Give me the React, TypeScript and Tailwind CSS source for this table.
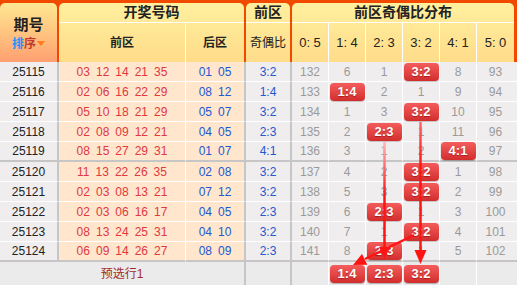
const ratios = ['0: 5', '1: 4', '2: 3', '3: 2', '4: 1', '5: 0']
const labels = ['0:5', '1:4', '2:3', '3:2', '4:1', '5:0']

const rows = [
  { id: '25115', front: ['03', '12', '14', '21', '35'], back: ['01', '05'], ratio: '3:2', dist: ['132', '6', '1', '', '8', '93'], hit: 3 },
  { id: '25116', front: ['02', '06', '16', '22', '29'], back: ['08', '12'], ratio: '1:4', dist: ['133', '', '2', '1', '9', '94'], hit: 1 },
  { id: '25117', front: ['05', '10', '18', '21', '29'], back: ['05', '07'], ratio: '3:2', dist: ['134', '1', '3', '', '10', '95'], hit: 3 },
  { id: '25118', front: ['02', '08', '09', '12', '21'], back: ['04', '05'], ratio: '2:3', dist: ['135', '2', '', '1', '11', '96'], hit: 2 },
  { id: '25119', front: ['08', '15', '27', '29', '31'], back: ['01', '07'], ratio: '4:1', dist: ['136', '3', '1', '2', '', '97'], hit: 4 },
  { id: '25120', front: ['11', '13', '22', '26', '35'], back: ['02', '08'], ratio: '3:2', dist: ['137', '4', '2', '', '1', '98'], hit: 3 },
  { id: '25121', front: ['02', '03', '08', '13', '21'], back: ['07', '12'], ratio: '3:2', dist: ['138', '5', '3', '', '2', '99'], hit: 3 },
  { id: '25122', front: ['02', '03', '06', '16', '17'], back: ['04', '05'], ratio: '2:3', dist: ['139', '6', '', '1', '3', '100'], hit: 2 },
  { id: '25123', front: ['08', '13', '24', '25', '31'], back: ['04', '10'], ratio: '3:2', dist: ['140', '7', '1', '', '4', '101'], hit: 3 },
  { id: '25124', front: ['06', '09', '14', '26', '27'], back: ['08', '09'], ratio: '2:3', dist: ['141', '8', '', '1', '5', '102'], hit: 2 },
]

const picked = [1, 2, 3]

function Badge({ text }: { text: string }) {
  return (
    <div className="w-[35px] h-[18px] rounded-[4px] bg-linear-to-b from-[#f45c5c] to-[#d22c2c] shadow-[0_1px_1px_rgba(0,0,0,0.25)] flex items-center justify-center text-white text-[13px] font-bold [text-shadow:0_1px_1px_rgba(120,0,0,0.5)]">
      {text}
    </div>
  )
}

function Header() {
  return (
    <div className="flex gap-[2px] bg-[#f14a00] pt-[3px] pr-[3px] text-[#222]">
      <div className="w-[57px] h-[59px] rounded-t-[5px] bg-linear-to-b from-[#ffe892] to-[#ff9f70] flex flex-col items-center justify-center pt-[2px]">
        <div className="text-[15px] font-bold leading-[20px]">期号</div>
        <div className="flex items-center text-[12px] font-bold leading-[18px]">
          <span className="text-[#2196f3]">排</span>
          <span className="text-[#c0392b]">序</span>
          <span className="ml-[1px] w-0 h-0 border-l-[4px] border-r-[4px] border-t-[5px] border-l-transparent border-r-transparent border-t-[#ff7a1a]" />
        </div>
      </div>
      <div className="w-[185px] rounded-t-[5px] bg-linear-to-b from-[#fff09e] to-[#ffdc8a]">
        <div className="h-[20px] border-b border-white flex items-center justify-center text-[14px] font-bold">开奖号码</div>
        <div className="flex h-[39px] text-[12px] font-bold">
          <div className="w-[127px] border-r border-white flex items-center justify-center">前区</div>
          <div className="flex-1 flex items-center justify-center">后区</div>
        </div>
      </div>
      <div className="w-[44px] rounded-t-[5px] bg-linear-to-b from-[#fff09e] to-[#ffdc8a]">
        <div className="h-[20px] border-b border-white flex items-center justify-center text-[14px] font-bold">前区</div>
        <div className="h-[39px] flex items-center justify-center text-[12px]">奇偶比</div>
      </div>
      <div className="w-[222px] rounded-t-[5px] bg-linear-to-b from-[#fff09e] to-[#ffdc8a]">
        <div className="h-[20px] border-b border-white flex items-center justify-center text-[14px] font-bold">前区奇偶比分布</div>
        <div className="flex h-[39px] text-[13px]">
          {ratios.map((r, i) => (
            <div key={r} className={i < 5 ? 'w-[37px] border-r border-white flex items-center justify-center' : 'flex-1 flex items-center justify-center'}>
              {r}
            </div>
          ))}
        </div>
      </div>
    </div>
  )
}

function Row({ r, i }: { r: (typeof rows)[number]; i: number }) {
  const bb = i === 4 || i === 9 ? 'border-b-2 border-b-[#c6c6c6]' : 'border-b border-b-white'
  return (
    <div className="flex h-[20px] text-[12px]">
      <div className={`w-[59px] ${bb} border-r-2 border-r-[#c6c6c6] bg-[#efeded] flex items-center justify-center text-[#222]`}>{r.id}</div>
      <div className={`w-[127px] ${bb} border-r border-r-white bg-[#ffe6cd] flex items-center justify-center gap-[6px] text-[#e0393e]`}>
        {r.front.map((n, k) => <span key={k}>{n}</span>)}
      </div>
      <div className={`w-[60px] ${bb} border-r-2 border-r-[#c6c6c6] bg-[#ffe6cd] flex items-center justify-center gap-[6px] text-[#2358d2]`}>
        {r.back.map((n, k) => <span key={k}>{n}</span>)}
      </div>
      <div className={`w-[46px] ${bb} border-r-2 border-r-[#c6c6c6] bg-[#efeded] flex items-center justify-center text-[#2358d2]`}>{r.ratio}</div>
      {r.dist.map((d, k) => (
        <div key={k} className={`${k < 5 ? 'w-[37px] border-r border-r-white' : 'w-[40px] pr-[3px]'} ${bb} bg-[#efeded] flex items-center justify-center text-[#9a9a9a]`}>
          {k === r.hit ? <Badge text={labels[k]} /> : d}
        </div>
      ))}
    </div>
  )
}

function Arrows() {
  return (
    <svg className="absolute left-0 top-0 pointer-events-none" width="517" height="285">
      <defs>
        <linearGradient id="ga" gradientUnits="userSpaceOnUse" x1="0" y1="142" x2="0" y2="195">
          <stop offset="0" stopColor="#ffb8b8" />
          <stop offset="1" stopColor="#ff1414" />
        </linearGradient>
        <linearGradient id="gb" gradientUnits="userSpaceOnUse" x1="0" y1="122" x2="0" y2="165">
          <stop offset="0" stopColor="#ff6a6a" />
          <stop offset="1" stopColor="#ff1414" />
        </linearGradient>
      </defs>
      <line x1="384.5" y1="142" x2="384.5" y2="249" stroke="url(#ga)" strokeWidth="2.5" />
      <polygon points="379,247 390,247 384.5,259" fill="#ff1414" />
      <line x1="420.5" y1="122" x2="420.5" y2="252" stroke="url(#gb)" strokeWidth="2.5" />
      <polygon points="414.5,250 426.5,250 420.5,264" fill="#ff1414" />
      <line x1="414" y1="235" x2="365" y2="259" stroke="#ff1414" strokeWidth="2.5" />
      <polygon points="367.3,264.7 362,253.9 353,265" fill="#ff1414" />
    </svg>
  )
}

export default function App() {
  return (
    <div className="relative w-[517px] h-[285px] overflow-hidden bg-[#ececec] font-['Liberation_Sans','Noto_Sans_CJK_SC',sans-serif]">
      <Header />
      {rows.map((r, i) => <Row key={r.id} r={r} i={i} />)}
      <div className="flex h-[23px] bg-[#ebebeb] text-[12px]">
        <div className="w-[246px] border-r-2 border-r-[#c6c6c6] flex items-center justify-center text-[#a0282a]">预选行1</div>
        <div className="w-[46px] border-r-2 border-r-[#c6c6c6]" />
        {labels.map((l, k) => (
          <div key={l} className={`${k < 5 ? 'w-[37px] border-r border-r-white' : 'w-[40px]'} flex items-center justify-center`}>
            {picked.includes(k) ? <Badge text={l} /> : null}
          </div>
        ))}
      </div>
      <Arrows />
    </div>
  )
}
